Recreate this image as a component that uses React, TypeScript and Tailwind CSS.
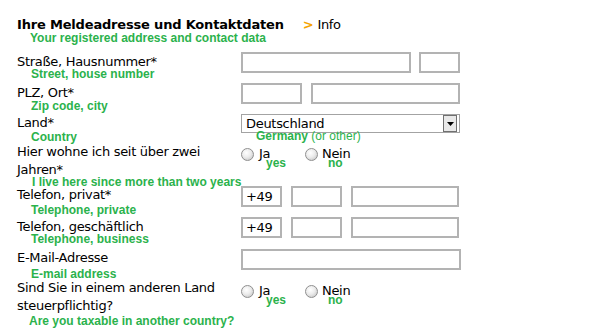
import React from "react";

const G = "font-['Liberation_Sans',Arial,sans-serif] font-bold text-[12px] leading-[13px] text-[#2bb24c] whitespace-nowrap tracking-normal";
const L = "leading-[18px] whitespace-nowrap";
const INP = "block h-[21px] border-2 border-[#b3b3b3] bg-white outline-none px-[3px] text-[13px] leading-[17px] font-['DejaVu_Sans',Verdana,sans-serif] tracking-[-0.3px] text-black";

function Radio() {
  return (
    <span className="block w-[13px] h-[13px] shrink-0 rounded-full border border-[#8f8f8f] bg-[radial-gradient(circle_at_40%_35%,#ffffff_0%,#ececec_45%,#bdbdbd_100%)]" />
  );
}

function RadioGroup() {
  return (
    <div className="flex">
      <div className="w-[64px]">
        <div className="flex items-start">
          <Radio />
          <span className="ml-[5px] leading-[13px] -mt-[1px]">Ja</span>
        </div>
        <div className={G + " ml-[25px] -mt-[4px]"}>yes</div>
      </div>
      <div>
        <div className="flex items-start">
          <Radio />
          <span className="ml-[4px] leading-[13px] -mt-[1px]">Nein</span>
        </div>
        <div className={G + " ml-[23px] -mt-[4px]"}>no</div>
      </div>
    </div>
  );
}

export default function App() {
  return (
    <div className="w-[600px] h-[332px] bg-white overflow-hidden pl-[17px] pt-[16px] font-['DejaVu_Sans',Verdana,sans-serif] text-[13px] tracking-[-0.3px] text-black">
      <div className="flex h-[18px] leading-[18px] whitespace-nowrap">
        <span className="font-bold tracking-[-0.18px]">Ihre Meldeadresse und Kontaktdaten</span>
        <span className="ml-[19px] text-[#f5a300] font-bold">&gt;</span>
        <span className="ml-[4px]">Info</span>
      </div>
      <div className={G + " ml-[13px] -mt-[2px]"}>Your registered address and contact data</div>

      <div className="mt-[7px]">
        {/* Row 1 */}
        <div className="flex h-[31px]">
          <div className="w-[224px] pt-[1px]">
            <div className={L}>Straße, Hausnummer*</div>
            <div className={G + " ml-[14px] -mt-[3px]"}>Street, house number</div>
          </div>
          <div className="flex">
            <input className={INP + " w-[170px]"} readOnly />
            <input className={INP + " w-[41px] ml-[8px]"} readOnly />
          </div>
        </div>

        {/* Row 2 */}
        <div className="flex h-[31px]">
          <div className="w-[224px] pt-[1px]">
            <div className={L}>PLZ, Ort*</div>
            <div className={G + " ml-[14px] -mt-[2px]"}>Zip code, city</div>
          </div>
          <div className="flex">
            <input className={INP + " w-[61px]"} readOnly />
            <input className={INP + " w-[149px] ml-[9px]"} readOnly />
          </div>
        </div>

        {/* Row 3 */}
        <div className="flex h-[31px]">
          <div className="w-[224px]">
            <div className={L}>Land*</div>
            <div className={G + " ml-[14px] -mt-[1px]"}>Country</div>
          </div>
          <div>
            <div className="flex w-[219px] h-[19px] border border-[#a3a3a3] bg-white">
              <span className="flex-1 pl-[4px] leading-[17px] whitespace-nowrap">Deutschland</span>
              <span className="mr-[2px] w-[14px] h-[17px] border border-[#707070] bg-[#e9e9e9] flex items-center justify-center">
                <svg width="7" height="4" viewBox="0 0 7 4"><path d="M0 0h7L3.5 4z" fill="#000" /></svg>
              </span>
            </div>
            <div className="font-['Liberation_Sans',Arial,sans-serif] text-[12px] leading-[13px] tracking-normal text-[#2bb24c] whitespace-nowrap ml-[15px] -mt-[3px]">
              <span className="font-bold">Germany</span> (or other)
            </div>
          </div>
        </div>

        {/* Row 4 */}
        <div className="flex h-[41px]">
          <div className="w-[224px] -mt-[2px]">
            <div className={L}>
              Hier wohne ich seit über zwei
              <br />
              Jahren*
            </div>
            <div className={G + " ml-[15px] -mt-[3px]"}>I live here since more than two years</div>
          </div>
          <div className="pt-[3px]">
            <RadioGroup />
          </div>
        </div>

        {/* Row 5 */}
        <div className="flex h-[31px]">
          <div className="w-[224px]">
            <div className={L}>Telefon, privat*</div>
            <div className={G + " ml-[14px]"}>Telephone, private</div>
          </div>
          <div className="flex">
            <input className={INP + " w-[41px]"} defaultValue="+49" readOnly />
            <input className={INP + " w-[51px] ml-[9px]"} readOnly />
            <input className={INP + " w-[108px] ml-[9px]"} readOnly />
          </div>
        </div>

        {/* Row 6 */}
        <div className="flex h-[32px]">
          <div className="w-[224px] pt-[1px]">
            <div className={L}>Telefon, geschäftlich</div>
            <div className={G + " ml-[14px] -mt-[3px]"}>Telephone, business</div>
          </div>
          <div className="flex">
            <input className={INP + " w-[41px]"} defaultValue="+49" readOnly />
            <input className={INP + " w-[51px] ml-[9px]"} readOnly />
            <input className={INP + " w-[108px] ml-[9px]"} readOnly />
          </div>
        </div>

        {/* Row 7 */}
        <div className="flex h-[32px]">
          <div className="w-[224px]">
            <div className={L}>E-Mail-Adresse</div>
            <div className={G + " ml-[14px] mt-[1px]"}>E-mail address</div>
          </div>
          <div className="flex">
            <input className={INP + " w-[220px]"} readOnly />
          </div>
        </div>

        {/* Row 8 */}
        <div className="flex">
          <div className="w-[224px] -mt-[2px]">
            <div className={L}>
              Sind Sie in einem anderen Land
              <br />
              steuerpflichtig?
            </div>
            <div className={G + " ml-[12px]"}>Are you taxable in another country?</div>
          </div>
          <div className="pt-[4px]">
            <RadioGroup />
          </div>
        </div>
      </div>
    </div>
  );
}
